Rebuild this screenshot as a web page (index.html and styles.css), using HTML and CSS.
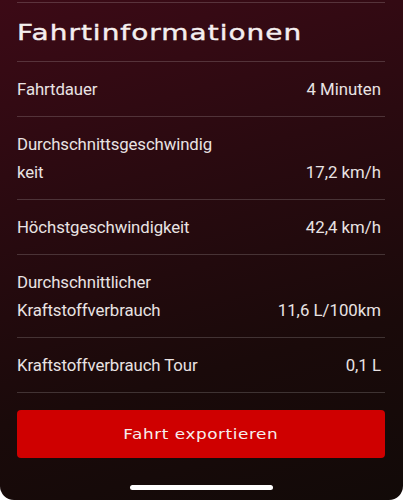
FILE: index.html
```html
<!DOCTYPE html>
<html lang="de">
<head>
  <meta charset="utf-8">
  <meta name="viewport" content="width=device-width, initial-scale=1">
  <title>Fahrtinformationen</title>
  <link rel="stylesheet" href="styles.css">
</head>
<body>

  <main class="screen">
    <h1 class="title"><span class="wide">Fahrtinformationen</span></h1>

    <ul class="facts">
      <li class="fact">
        <span class="label">Fahrtdauer</span>
        <span class="value">4 Minuten</span>
      </li>
      <li class="fact">
        <span class="label">Durchschnittsgeschwindig<br>keit</span>
        <span class="value">17,2 km/h</span>
      </li>
      <li class="fact">
        <span class="label">Höchstgeschwindigkeit</span>
        <span class="value">42,4 km/h</span>
      </li>
      <li class="fact">
        <span class="label">Durchschnittlicher<br>Kraftstoffverbrauch</span>
        <span class="value">11,6 L/100km</span>
      </li>
      <li class="fact">
        <span class="label">Kraftstoffverbrauch Tour</span>
        <span class="value">0,1 L</span>
      </li>
    </ul>

    <button class="export"><span class="wide">Fahrt exportieren</span></button>

    <div class="home-bar"></div>
  </main>

</body>
</html>
```

FILE: styles.css
```css
*, *::before, *::after { box-sizing: border-box }

html, body {
  margin: 0;
  height: 100%;
  background: #fff;
}

body {
  font: 16.8px/28px Roboto, sans-serif;
  color: #e9e3e3;
  --line: rgba(255, 255, 255, 0.17);
  --red: #cf0000;
}

.screen {
  height: 500px;
  padding: 2px 18px 0 17px;
  display: flex;
  flex-direction: column;
  border-radius: 0 0 14px 14px;
  background:
    linear-gradient(165deg, #3c0a16 0%, #2a0a10 35%, #1a0a0a 70%, #120a08 100%);
}

/* headline font of the app is an extended face */
.wide {
  display: inline-block;
  transform: scaleX(1.16);
}

.title {
  margin: 0;
  border-top: 1px solid var(--line);
  border-bottom: 1px solid var(--line);
  height: 60px;
  display: flex;
  align-items: center;
  font: 400 22px/1 "DejaVu Sans", sans-serif;
  letter-spacing: 0.8px;
  color: #f4efef;
  -webkit-text-stroke: 0.4px #f4efef;
  padding-top: 2px;
}

.title .wide {
  transform: scaleX(1.27);
  transform-origin: left center;
}


/*///////////// Facts */

.facts {
  list-style: none;
  margin: 0;
  padding: 0;
}

.fact {
  display: flex;
  justify-content: space-between;
  align-items: flex-end;
  padding: 13px 4px 13px 0;
  border-bottom: 1px solid var(--line);
}

.label {
  letter-spacing: -0.1px;
}

.value {
  white-space: nowrap;
}


/*///////////// Button */

.export {
  margin: 17px 0 0 0;
  height: 48px;
  border: none;
  border-radius: 4px;
  background: var(--red);
  color: #f6eeee;
  font: 400 14.5px/1 "DejaVu Sans", sans-serif;
  letter-spacing: 0.5px;
}

.home-bar {
  align-self: center;
  width: 143px;
  height: 5px;
  border-radius: 3px;
  background: #fff;
  margin-top: 27px;
}
```
